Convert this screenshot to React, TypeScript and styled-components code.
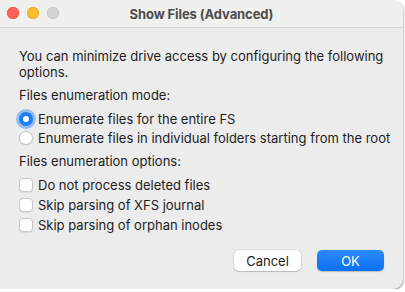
import React from 'react';
import styled, {createGlobalStyle} from "styled-components";

const GlobalStyle = createGlobalStyle`
  html, body {
    margin: 0;
    padding: 0;
    background: #ffffff;
  }
  body {
    font-family: "Inter", "Liberation Sans", sans-serif;
    -webkit-font-smoothing: antialiased;
  }
`

const Window = styled.div`
  width: 403px;
  height: 289px;
  background: #ececec;
  border-radius: 0 10px 10px 0;
  box-shadow: 0 1px 0 #a9a9a9, 1px 1px 2px rgba(0, 0, 0, 0.25);
  overflow: hidden;
  display: flex;
  flex-direction: column;
`

const TitleBar = styled.div`
  height: 27px;
  flex-shrink: 0;
  background: #f0f0ee;
  border-bottom: 1px solid #d2d2d0;
  position: relative;
  display: flex;
  align-items: center;
  justify-content: center;
`

const Lights = styled.div`
  position: absolute;
  left: 7px;
  top: 7px;
  display: flex;
  gap: 8px;
`

const Light = styled.span<{ $color: string; $edge: string }>`
  width: 12px;
  height: 12px;
  border-radius: 50%;
  background: ${p => p.$color};
  box-shadow: inset 0 0 0 0.5px ${p => p.$edge};
`

const Title = styled.div`
  font-size: 13px;
  font-weight: 700;
  color: #4c4c4c;
  letter-spacing: -0.1px;
`

const Body = styled.div`
  flex: 1;
  display: flex;
  flex-direction: column;
  padding: 20px 19px 0 19px;
  font-size: 13px;
  line-height: 16px;
  color: #1d1d1d;
`

const Intro = styled.p`
  margin: 0 0 7px;
`

const Heading = styled.div`
  margin-bottom: 6px;
`

const Option = styled.label<{ $h: number }>`
  display: flex;
  align-items: center;
  gap: 5px;
  height: ${p => p.$h}px;
  white-space: nowrap;
`

const Group = styled.div`
  margin-bottom: 6px;
`

const Radio = styled.span<{ $on?: boolean }>`
  width: 14px;
  height: 14px;
  border-radius: 50%;
  box-sizing: border-box;
  flex-shrink: 0;
  display: flex;
  align-items: center;
  justify-content: center;
  background: ${p => p.$on ? "#1f7ef7" : "#ffffff"};
  border: ${p => p.$on ? "none" : "1px solid #c4c4c4"};
  box-shadow: ${p => p.$on ? "0 0 0 3px rgba(46, 130, 247, 0.45)" : "0 0.5px 1px rgba(0,0,0,0.12)"};

  &::after {
    content: "";
    display: ${p => p.$on ? "block" : "none"};
    width: 6px;
    height: 6px;
    border-radius: 50%;
    background: #ffffff;
  }
`

const Check = styled.span`
  width: 14px;
  height: 14px;
  box-sizing: border-box;
  flex-shrink: 0;
  border-radius: 4px;
  background: #ffffff;
  border: 1px solid #c8c8c8;
  box-shadow: 0 0.5px 1px rgba(0,0,0,0.08);
`

const Actions = styled.div`
  display: flex;
  justify-content: flex-end;
  gap: 16px;
  margin-top: auto;
  margin-bottom: 18px;
`

const Button = styled.button<{ $primary?: boolean }>`
  width: 67px;
  height: 21px;
  border-radius: 5px;
  font-family: inherit;
  font-size: 13px;
  padding: 0;
  border: none;
  color: ${p => p.$primary ? "#ffffff" : "#1d1d1d"};
  background: ${p => p.$primary ? "linear-gradient(#2b8af9, #0a70f4)" : "#ffffff"};
  box-shadow: ${p => p.$primary ? "0 0.5px 1px rgba(0,0,0,0.2)" : "0 0 0 0.5px rgba(0,0,0,0.15), 0 1px 1px rgba(0,0,0,0.15)"};
`

export default function App() {
    return (
        <>
            <GlobalStyle/>
            <Window>
                <TitleBar>
                    <Lights>
                        <Light $color="#fe5f57" $edge="#e0443e"/>
                        <Light $color="#febc2e" $edge="#dea123"/>
                        <Light $color="#d4d4d2" $edge="#bdbdbb"/>
                    </Lights>
                    <Title>Show Files (Advanced)</Title>
                </TitleBar>
                <Body>
                    <Intro>You can minimize drive access by configuring the following options.</Intro>
                    <Heading>Files enumeration mode:</Heading>
                    <Group>
                        <Option $h={19}><Radio $on/>Enumerate files for the entire FS</Option>
                        <Option $h={19}><Radio/>Enumerate files in individual folders starting from the root</Option>
                    </Group>
                    <Heading>Files enumeration options:</Heading>
                    <Option $h={20}><Check/>Do not process deleted files</Option>
                    <Option $h={20}><Check/>Skip parsing of XFS journal</Option>
                    <Option $h={20}><Check/>Skip parsing of orphan inodes</Option>
                    <Actions>
                        <Button>Cancel</Button>
                        <Button $primary>OK</Button>
                    </Actions>
                </Body>
            </Window>
        </>
    );
}
